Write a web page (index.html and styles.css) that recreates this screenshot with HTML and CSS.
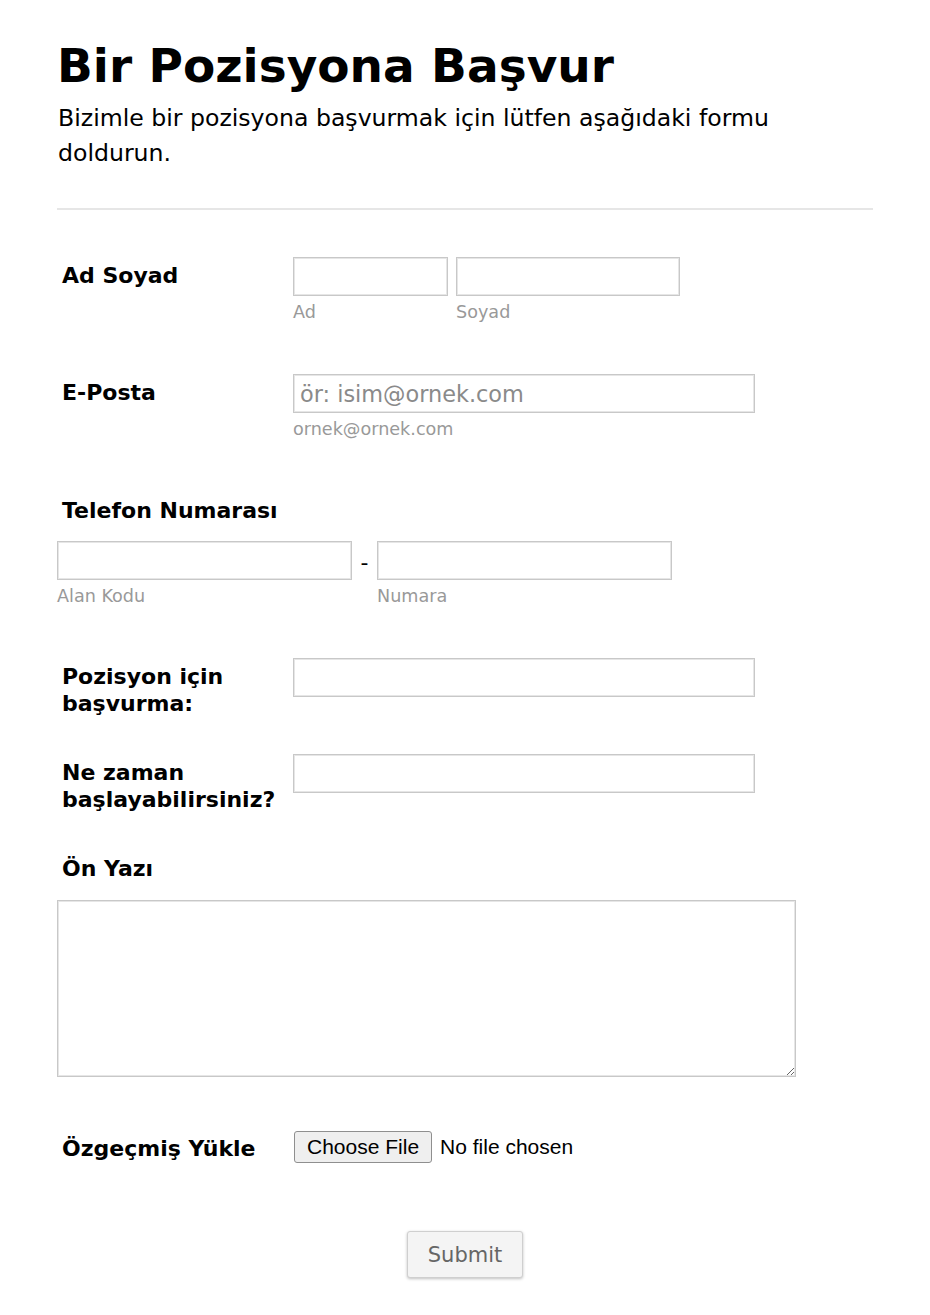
FILE: index.html
```html
<!DOCTYPE html>
<html lang="tr">
<head>
<meta charset="utf-8">
<title>Bir Pozisyona Başvur</title>
<link rel="stylesheet" href="styles.css">
</head>
<body>
<div class="page">
  <header class="header">
    <h1 class="title">Bir Pozisyona Başvur</h1>
    <p class="subtitle">Bizimle bir pozisyona başvurmak için lütfen aşağıdaki formu doldurun.</p>
  </header>
  <form class="form">
    <div class="row row-name">
      <label class="label">Ad Soyad</label>
      <div class="field pair">
        <div class="sub">
          <input class="input w-first" type="text">
          <span class="hint">Ad</span>
        </div>
        <div class="sub">
          <input class="input w-last" type="text">
          <span class="hint">Soyad</span>
        </div>
      </div>
    </div>
    <div class="row row-email">
      <label class="label">E-Posta</label>
      <div class="field">
        <input class="input w-wide" type="email" placeholder="ör: isim@ornek.com">
        <span class="hint">ornek@ornek.com</span>
      </div>
    </div>
    <div class="row-top row-phone">
      <label class="label">Telefon Numarası</label>
      <div class="phone">
        <div class="sub">
          <input class="input w-phone" type="tel">
          <span class="hint">Alan Kodu</span>
        </div>
        <span class="dash">-</span>
        <div class="sub">
          <input class="input w-phone" type="tel">
          <span class="hint">Numara</span>
        </div>
      </div>
    </div>
    <div class="row row-pos">
      <label class="label">Pozisyon için başvurma:</label>
      <div class="field">
        <input class="input w-wide" type="text">
      </div>
    </div>
    <div class="row row-when">
      <label class="label">Ne zaman başlayabilirsiniz?</label>
      <div class="field">
        <input class="input w-wide" type="text">
      </div>
    </div>
    <div class="row-top row-cover">
      <label class="label">Ön Yazı</label>
      <textarea class="textarea"></textarea>
    </div>
    <div class="row row-file">
      <label class="label">Özgeçmiş Yükle</label>
      <div class="field">
        <input class="file" type="file">
      </div>
    </div>
    <div class="actions">
      <button class="submit" type="button">Submit</button>
    </div>
  </form>
</div>
</body>
</html>
```

FILE: styles.css
```css
html, body {
  margin: 0;
  padding: 0;
  background: #fff;
}
body {
  font-family: "DejaVu Sans", Verdana, sans-serif;
  color: #000;
}
.page {
  width: 816px;
  padding: 36px 57px 0 57px;
}
.header {
  padding-bottom: 37px;
  border-bottom: 2px solid #e6e6e6;
}
.title {
  margin: 0;
  font-size: 47px;
  line-height: 60px;
  font-weight: bold;
}
.subtitle {
  margin: 5px 0 0 0;
  max-width: 760px;
  font-size: 23.6px;
  line-height: 35px;
  padding-left: 1px;
}
.form {
  padding-top: 47px;
}
.row {
  display: flex;
  align-items: flex-start;
}
.row-top {
  display: flex;
  flex-direction: column;
  align-items: flex-start;
}
.label {
  display: block;
  width: 231px;
  flex: none;
  padding-left: 5px;
  padding-top: 5px;
  font-size: 22px;
  line-height: 27px;
  font-weight: bold;
}
.row-top .label {
  width: auto;
  padding-top: 0;
}
.field {
  display: flex;
  flex-direction: column;
  align-items: flex-start;
}
.pair, .phone {
  display: flex;
  flex-direction: row;
  align-items: flex-start;
}
.pair {
  gap: 8px;
}
.sub {
  display: flex;
  flex-direction: column;
}
.input {
  box-sizing: border-box;
  height: 39px;
  margin: 0;
  border: 1px solid #c8c8c8;
  box-shadow: inset 0 0 0 1px #e6e6e6;
  background: #fff;
  padding: 0 6px;
  font-family: "DejaVu Sans", Verdana, sans-serif;
  font-size: 22.4px;
  color: #555;
  outline: none;
}
.input::placeholder {
  color: #8a8a8a;
}
.w-first { width: 155px; }
.w-last { width: 224px; }
.w-wide { width: 462px; }
.w-phone { width: 295px; }
.hint {
  margin-top: 5px;
  font-size: 17.6px;
  line-height: 22px;
  color: #999;
}
.dash {
  width: 25px;
  text-align: center;
  font-size: 22px;
  line-height: 39px;
  padding-top: 2px;
}
.row-name { margin-bottom: 51px; }
.row-email { margin-bottom: 57px; }
.row-phone .label { margin-bottom: 17px; }
.row-phone { margin-bottom: 51px; }
.row-pos { margin-bottom: 37px; }
.row-when { margin-bottom: 42px; }
.row-cover .label { margin-bottom: 18px; }
.textarea {
  box-sizing: border-box;
  width: 739px;
  height: 177px;
  margin: 0;
  border: 1px solid #c8c8c8;
  box-shadow: inset 0 0 0 1px #e6e6e6;
  resize: vertical;
  font-family: "DejaVu Sans", Verdana, sans-serif;
  font-size: 18px;
  outline: none;
}
.row-cover { margin-bottom: 54px; }
.row-file .label { padding-top: 4px; }
.file {
  font-family: "Liberation Sans", Arial, sans-serif;
  font-size: 21px;
  margin: 0 0 0 1px;
}
.file::file-selector-button {
  font-family: "Liberation Sans", Arial, sans-serif;
  font-size: 21px;
  height: 32px;
  padding: 1px 12px;
  margin-right: 8px;
  border: 1px solid #8f8f8f;
  border-radius: 3px;
  background: #efefef;
  color: #000;
}
.actions {
  display: flex;
  justify-content: center;
  padding-top: 68px;
  padding-bottom: 38px;
}
.submit {
  box-sizing: border-box;
  width: 116px;
  height: 47px;
  border: 1px solid #cfcfcf;
  border-radius: 3px;
  background: #f4f4f4;
  box-shadow: 0 1px 3px rgba(0, 0, 0, 0.25);
  font-family: "DejaVu Sans", Verdana, sans-serif;
  font-size: 21px;
  color: #666;
}
```
